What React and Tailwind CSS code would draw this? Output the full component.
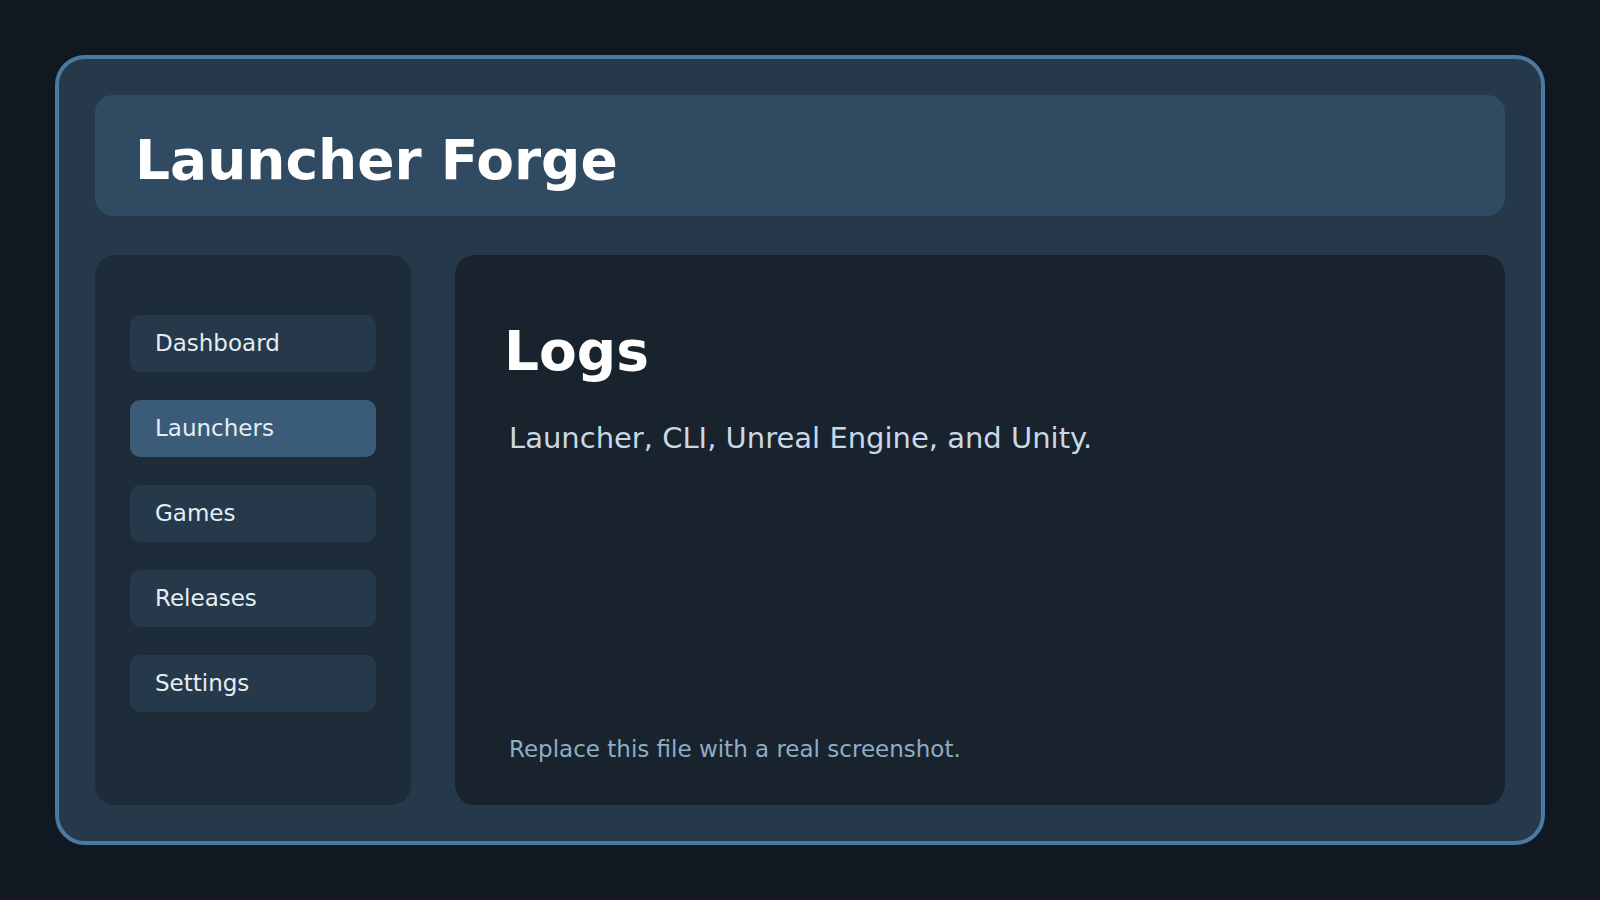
const navItems = ["Dashboard", "Launchers", "Games", "Releases", "Settings"];

export default function App() {
  return (
    <div
      className="min-h-screen bg-[#111821] p-[55px]"
      style={{ fontFamily: '"DejaVu Sans", "Liberation Sans", sans-serif' }}
    >
      <div className="h-[790px] rounded-[30px] border-4 border-[#4a7aa2] bg-[#25394a] p-[36px] flex flex-col gap-[39px]">
        {/* Header */}
        <header className="h-[121px] shrink-0 rounded-[18px] bg-[#304b61] pl-[40px] pt-[38px]">
          <h1 className="text-[55px] leading-none font-bold text-white">Launcher Forge</h1>
        </header>

        <div className="flex-1 flex gap-[44px]">
          {/* Sidebar */}
          <nav className="w-[316px] shrink-0 rounded-[20px] bg-[#1e2b38] px-[35px] pt-[60px] flex flex-col gap-[28px]">
            {navItems.map((item) => (
              <div
                key={item}
                className={
                  item === "Launchers"
                    ? "h-[57px] rounded-[10px] bg-[#3b5c78] pl-[25px] flex items-center text-[23px] text-[#e6edf3]"
                    : "h-[57px] rounded-[10px] bg-[#25394a] pl-[25px] flex items-center text-[23px] text-[#e6edf3]"
                }
              >
                {item}
              </div>
            ))}
          </nav>

          {/* Main panel */}
          <main className="flex-1 rounded-[20px] bg-[#18232e] pl-[54px] pt-[69px] pb-[44px] flex flex-col">
            <h2 className="text-[55px] leading-none font-bold text-white -ml-[5px]">Logs</h2>
            <p className="mt-[45px] text-[29px] leading-none text-[#cbd8e4]">
              Launcher, CLI, Unreal Engine, and Unity.
            </p>
            <p className="mt-auto text-[23px] leading-none text-[#8eadc6]">
              Replace this file with a real screenshot.
            </p>
          </main>
        </div>
      </div>
    </div>
  );
}
